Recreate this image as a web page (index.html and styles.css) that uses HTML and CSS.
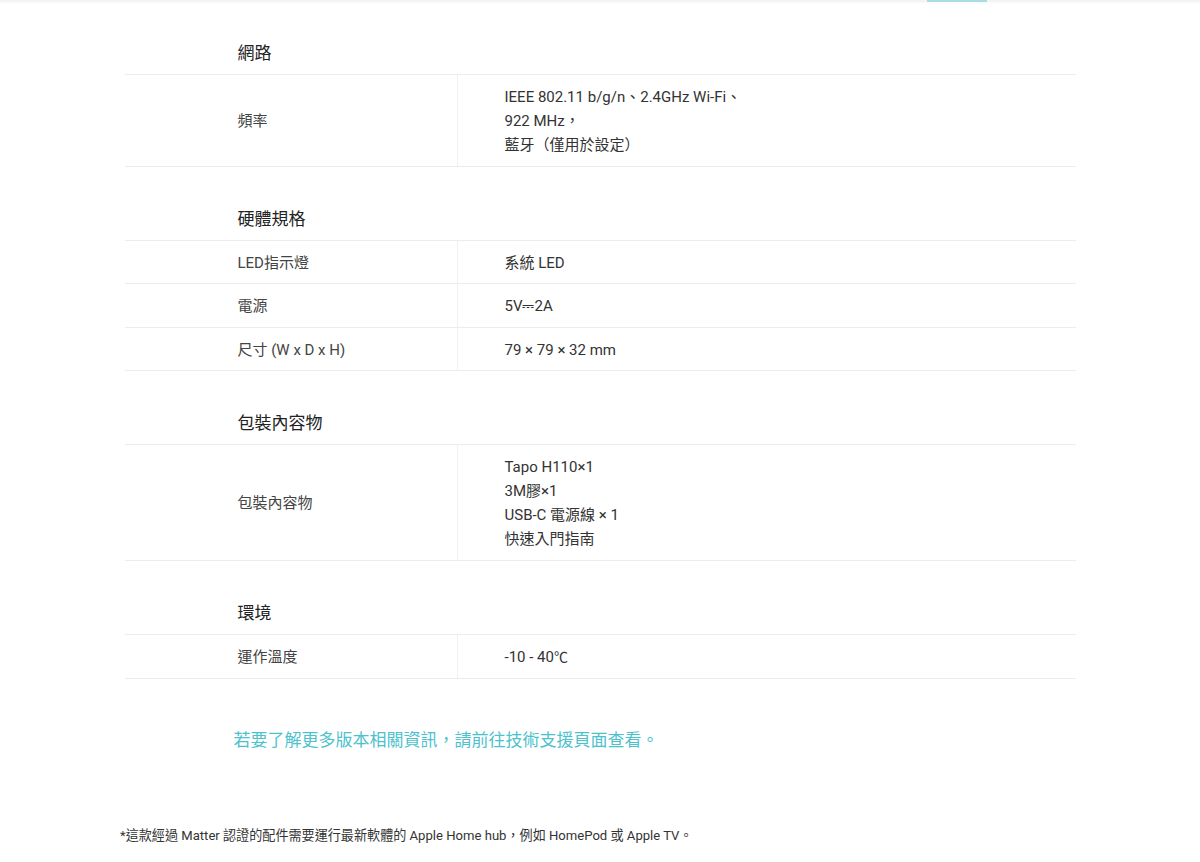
FILE: index.html
```html
<!DOCTYPE html>
<html lang="zh-Hant">
<head>
    <meta charset="UTF-8">
    <meta name="viewport" content="width=device-width, initial-scale=1.0">
    <title>Tapo H110 規格</title>
    <link rel="stylesheet" href="styles.css">
</head>
<body>
    <!-- Sticky tab bar edge -->
    <div class="tab-edge"><span class="tab-active"></span></div>

    <div class="specs">
        <section class="spec-group">
            <h3>網路</h3>
            <div class="spec-row">
                <div class="spec-name">頻率</div>
                <div class="spec-value">
                    IEEE 802.11 b/g/n、2.4GHz Wi-Fi、<br>
                    922 MHz，<br>
                    藍牙（僅用於設定）
                </div>
            </div>
        </section>

        <section class="spec-group">
            <h3>硬體規格</h3>
            <div class="spec-row single">
                <div class="spec-name">LED指示燈</div>
                <div class="spec-value">系統 LED</div>
            </div>
            <div class="spec-row single">
                <div class="spec-name">電源</div>
                <div class="spec-value">5V⎓2A</div>
            </div>
            <div class="spec-row single">
                <div class="spec-name">尺寸 (W x D x H)</div>
                <div class="spec-value">79 × 79 × 32 mm</div>
            </div>
        </section>

        <section class="spec-group">
            <h3>包裝內容物</h3>
            <div class="spec-row">
                <div class="spec-name">包裝內容物</div>
                <div class="spec-value">
                    Tapo H110×1<br>
                    3M膠×1<br>
                    USB-C 電源線 × 1<br>
                    快速入門指南
                </div>
            </div>
        </section>

        <section class="spec-group">
            <h3>環境</h3>
            <div class="spec-row">
                <div class="spec-name">運作溫度</div>
                <div class="spec-value">-10 - 40<span class="deg">℃</span></div>
            </div>
        </section>

        <p class="more-info"><a href="#">若要了解更多版本相關資訊，請前往技術支援頁面查看。</a></p>
    </div>

    <!-- Footnote -->
    <footer>
        <p>*這款經過 Matter 認證的配件需要運行最新軟體的 Apple Home hub，例如 HomePod 或 Apple TV。</p>
    </footer>
</body>
</html>
```

FILE: styles.css
```css
/* Global */
body {
    margin: 0;
    font-family: Roboto, "Noto Sans CJK TC", sans-serif;
    color: #333333;
    background: #ffffff;
}

/* Tab bar edge at the top */
.tab-edge {
    position: fixed;
    top: 0;
    left: 0;
    right: 0;
    height: 2px;
    background: #f4f4f4;
    box-shadow: 0 1px 2px rgba(0, 0, 0, 0.03);
}

.tab-active {
    display: block;
    width: 60px;
    height: 2px;
    margin-left: 927px;
    background: #a9dde2;
}

/* Spec table */
.specs {
    width: 951px;
    margin: 0 auto;
}

.spec-group h3 {
    margin: 0;
    padding: 40px 0 9px 113px;
    font-size: 17px;
    font-weight: 400;
    line-height: 24px;
    color: #222222;
    border-bottom: 1px solid #ececec;
}

.spec-group:first-child h3 {
    padding-top: 41px;
}

.spec-row {
    display: grid;
    grid-template-columns: 332px 1fr;
    border-bottom: 1px solid #ececec;
    font-size: 15px;
    line-height: 24px;
}

.spec-row.single .spec-name,
.spec-row.single .spec-value {
    padding-bottom: 8.4px;
}

.spec-name {
    display: flex;
    align-items: center;
    padding: 10px 0 9px 113px;
    color: #444444;
}

.spec-value {
    padding: 10px 0 9px 47px;
    border-left: 1px solid #f0f0f0;
}

.deg {
    font-family: "Noto Sans CJK TC", sans-serif;
    font-size: 14px;
    line-height: 1;
}

/* Support link */
.more-info {
    margin: 49px 0 0 109px;
    font-size: 17px;
    line-height: 24px;
}

.more-info a {
    color: #4cc2cd;
    text-decoration: none;
}

/* Footnote */
footer {
    width: 960px;
    margin: 74px auto 0;
    font-size: 13.1px;
    line-height: 20px;
}

footer p {
    margin: 0;
    color: #333333;
}
```
